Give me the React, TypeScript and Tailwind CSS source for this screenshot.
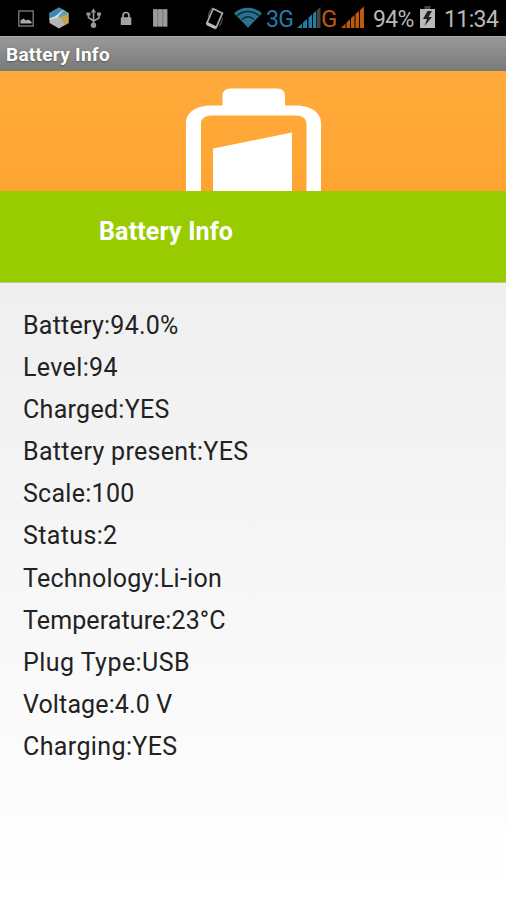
import React from "react";

const rows: { text: string; spacing: string }[] = [
  { text: "Battery:94.0%", spacing: "tracking-[0.25px]" },
  { text: "Level:94", spacing: "tracking-[0.36px]" },
  { text: "Charged:YES", spacing: "tracking-[0.3px]" },
  { text: "Battery present:YES", spacing: "tracking-[0.32px]" },
  { text: "Scale:100", spacing: "tracking-[0.28px]" },
  { text: "Status:2", spacing: "tracking-[0.36px]" },
  { text: "Technology:Li-ion", spacing: "tracking-[0.25px]" },
  { text: "Temperature:23°C", spacing: "tracking-[0.1px]" },
  { text: "Plug Type:USB", spacing: "tracking-[0.45px]" },
  { text: "Voltage:4.0 V", spacing: "tracking-[0.13px]" },
  { text: "Charging:YES", spacing: "tracking-[0.38px]" },
];

function PictureIcon() {
  return (
    <svg className="ml-[18px] h-9 w-4 shrink-0" viewBox="0 0 16 36" fill="none">
      <rect x="0.8" y="11" width="14.4" height="15" stroke="#777" strokeWidth="1.4" />
      <path d="M2.5 23.5v-3l3-2 2.5 2 2-1 3.5 2v2z" fill="#aaa" />
    </svg>
  );
}

function CubeIcon() {
  return (
    <svg className="ml-[15px] h-9 w-5 shrink-0" viewBox="0 0 20 36">
      <path d="M10 7.5 19.5 13v10L10 28.5.5 23V13z" fill="#b5b5b2" />
      <path d="M10 7.5.5 13v5.5L6 16.500l8-6.700z" fill="#3988b5" />
      <path d="m14 9.800 2.500 1.500L9 17.500.5 20v-1.500L6 16.500z" fill="#d5dcdc" />
      <path d="m14.500 10.200 5 2.800v1.500L11 17.500l-2-1z" fill="#5f9fbd" />
      <path d="m19.500 14-8.500 3.500 5 7.500 3.500-2z" fill="#c8a548" />
    </svg>
  );
}

function UsbIcon() {
  return (
    <svg className="ml-[17px] h-9 w-4 shrink-0" viewBox="0 0 16 36" fill="none" stroke="#999" strokeWidth="1.7">
      <path d="M7.5 26V11M2.5 14v3.5L7.5 21l5.5-3v-4" />
      <path d="m4.8 12.5 2.7-4 2.7 4zM.5 12.5h4v3h-4zM11 12.5h4v3h-4z" fill="#999" stroke="none" />
      <circle cx="7.5" cy="25.2" r="2.7" fill="#999" stroke="none" />
    </svg>
  );
}

function LockIcon() {
  return (
    <svg className="ml-[18px] h-9 w-3 shrink-0" viewBox="0 0 12 36" fill="none">
      <path d="M3 18v-2.500a3 3 0 0 1 6 0V18" stroke="#a2a2a2" strokeWidth="1.7" />
      <rect x="0.800" y="17.300" width="10.500" height="7.700" rx="0.500" fill="#a2a2a2" />
    </svg>
  );
}

function BarsIcon() {
  return (
    <svg className="ml-[21px] h-9 w-[15px] shrink-0" viewBox="0 0 15 36">
      <rect y="9.300" width="14.500" height="17.200" fill="#848484" />
      <path d="M.5 9.300H4v17.200H.5zM5.500 9.300H9v17.200H5.500zM10.500 9.300H14v17.200h-3.500z" fill="#9b9b9b" />
    </svg>
  );
}

function RotateIcon() {
  return (
    <svg className="ml-9 h-9 w-[22px] shrink-0" viewBox="0 0 22 36" fill="none">
      <path d="m9.200 8.700 9.200 4.500-6.200 14.500-9.300-4.500z" stroke="#aaa" strokeWidth="1.700" />
      <path d="m2.500 21.500 9.700 4.700-.7 3.300-9.200-4.400z" fill="#bbb" />
      <path d="M4 17l1.500-5.500L8 8.500M18.500 18l-1 4.500-2.500 4" stroke="#555" strokeWidth="1.100" />
    </svg>
  );
}

function WifiIcon() {
  return (
    <svg className="ml-2 h-9 w-[28px] shrink-0" viewBox="0 0 28 36" fill="none">
      <path d="M0 13.200C8 6 20 6 28 13.200L14 27.700z" fill="#297391" />
      <path d="M3.200 15.600C9.500 10.200 18.500 10.200 24.800 15.600M7.500 19.500c4-3.400 9-3.400 13 0" stroke="#0b2a36" strokeWidth="1.400" />
    </svg>
  );
}

function SignalIcon() {
  return (
    <svg className="ml-[3px] h-9 w-6 shrink-0" viewBox="0 0 24 36">
      <path d="M0 28l5-4.500V28zM6 28v-5.500l4-3.500v9zM11.500 28V17.500l3.500-3V28zM16 28V13.500l3-2.500v17z" fill="#237da7" />
      <path d="M19.500 28V10.500L23.500 7v21z" fill="#454545" />
    </svg>
  );
}

function RoamingSignalIcon() {
  return (
    <svg className="ml-[3px] h-9 w-6 shrink-0" viewBox="0 0 24 36">
      <path d="M1 28l4.500-4.500V28zM6.500 28v-5.500l3.500-3.200V28zM11 28V18l3.500-3v13zM15.500 28V14l3.500-3v17zM20 28v-18L24 6.500V28z" fill="#be5a10" />
    </svg>
  );
}

function ChargingIcon() {
  return (
    <svg className="h-9 w-[15px] shrink-0" viewBox="0 0 15 36">
      <path d="M0 9h15v19H0z" fill="#b9b9b9" />
      <path d="M4.500 6h6v3h-6z" fill="#444" />
      <path d="m7.500 11-4.500 8h4l-2.500 7 7.500-9H8.500l3.500-6z" fill="#222" />
    </svg>
  );
}

function BatteryArtwork() {
  return (
    <svg className="ml-[186px] block h-[120px] w-[136px]" viewBox="0 0 136 120">
      <path
        fill="white"
        fillRule="evenodd"
        d="M0 120V52C0 41 11 34.500 25 34.500h11.500V25q0-7.500 8-7.500h46.500q8 0 8 7.500v9.500H110c14 0 25 6.500 25 17.500v68h-14.500V53q0-8.500-11-8.500h-83Q15 44.500 15 53v67z"
      />
      <path d="m27 77.500 79-16V120H27z" fill="white" />
    </svg>
  );
}

export default function App() {
  return (
    <main className="flex h-[900px] w-[506px] flex-col overflow-hidden bg-white font-['Roboto',sans-serif]">
      <div className="flex h-9 shrink-0 items-center bg-black text-[23px] leading-9 whitespace-nowrap">
        <PictureIcon />
        <CubeIcon />
        <UsbIcon />
        <LockIcon />
        <BarsIcon />
        <RotateIcon />
        <WifiIcon />
        <span className="mt-[3px] ml-[4px] h-9 w-[28px] text-[#237da7] tracking-[-0.7px]">3G</span>
        <SignalIcon />
        <span className="mt-[2px] h-9 w-4 text-[24px] text-[#be5a10]">G</span>
        <RoamingSignalIcon />
        <span className="mt-[3px] ml-[9px] h-9 w-[47px] text-[#b8b8b8] tracking-[-0.7px]">94%</span>
        <ChargingIcon />
        <span className="mt-[3px] ml-[9px] h-9 text-[#b8b8b8] tracking-[-0.6px]">11:34</span>
      </div>
      <header className="flex h-[35px] shrink-0 items-center border-t border-[#aaa] bg-linear-to-b from-[#999] to-[#797979] pl-1.5 text-[19px] leading-none font-bold text-white">
        <span className="tracking-[0.28px] [text-shadow:0_1px_2px_#555]">Battery Info</span>
      </header>
      <section className="h-[120px] shrink-0 bg-linear-to-b from-[#ffab3b] to-[#ffa432]">
        <BatteryArtwork />
      </section>
      <section className="h-[92px] shrink-0 border-b border-[#b9ca96] bg-[#99cc00] pt-[27px] pl-[99px] text-[25px] leading-7 font-bold text-white">
        <h1 className="tracking-[0.15px]">Battery Info</h1>
      </section>
      <section className="flex-1 bg-linear-to-b from-[#efefef] to-white pt-[21.5px] pl-[23px] text-[25px] text-[#222]">
        {rows.map((row) => (
          <p key={row.text} className="h-[42.2px] leading-[42.2px]">
            <span className={row.spacing}>{row.text}</span>
          </p>
        ))}
      </section>
    </main>
  );
}
